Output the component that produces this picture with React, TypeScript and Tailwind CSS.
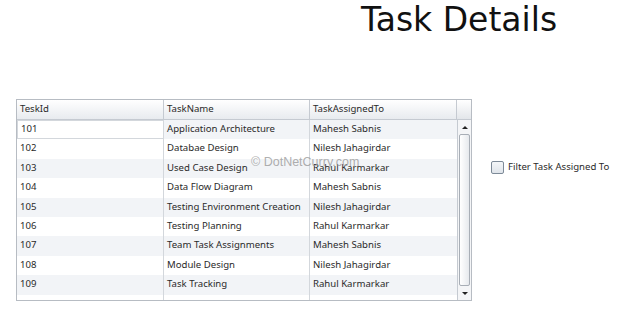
const rows = [
  ["101", "Application Architecture", "Mahesh Sabnis"],
  ["102", "Databae Design", "Nilesh Jahagirdar"],
  ["103", "Used Case Design", "Rahul Karmarkar"],
  ["104", "Data Flow Diagram", "Mahesh Sabnis"],
  ["105", "Testing Environment Creation", "Nilesh Jahagirdar"],
  ["106", "Testing Planning", "Rahul Karmarkar"],
  ["107", "Team Task Assignments", "Mahesh Sabnis"],
  ["108", "Module Design", "Nilesh Jahagirdar"],
  ["109", "Task Tracking", "Rahul Karmarkar"],
  ["110", "Deployment Planning", "Mahesh Sabnis"],
];

const uiFont = { fontFamily: '"Noto Sans", "Open Sans", sans-serif' };

export default function App() {
  return (
    <div className="relative w-[624px] h-[325px] bg-white overflow-hidden text-[#2a2a2a]" style={uiFont}>
      {/* Title */}
      <div className="pl-[361px] h-[99px]">
        <h1
          className="text-[33px] leading-[40px] text-[#111]"
          style={{ fontFamily: '"DejaVu Sans", Verdana, sans-serif' }}
        >
          Task Details
        </h1>
      </div>

      <div className="flex items-start pl-[16px]">
        {/* Data grid */}
        <div className="w-[456px] h-[202px] border border-[#b7bcc3] flex flex-col bg-white">
          {/* Header */}
          <div className="flex h-[20px] border-b border-[#c5cad1] bg-gradient-to-b from-white to-[#e8ebef] text-[9.6px] leading-[18px]">
            <div className="w-[147px] pl-[3px] border-r border-[#c5cad1]">TeskId</div>
            <div className="w-[146px] pl-[3px] border-r border-[#c5cad1]">TaskName</div>
            <div className="w-[147px] pl-[3px] border-r border-[#c5cad1]">TaskAssignedTo</div>
            <div className="flex-1 bg-gradient-to-b from-white to-[#e3e6ea]"></div>
          </div>

          {/* Body */}
          <div className="flex flex-1 overflow-hidden">
            <div className="w-[440px] overflow-hidden">
              {rows.map((r, i) => (
                <div
                  key={r[0]}
                  className={`flex h-[19.4px] text-[9.6px] leading-[18px] ${i % 2 === 0 ? "bg-[#f2f4f7]" : "bg-white"}`}
                >
                  <div
                    className={`w-[147px] pl-[3px] border-r border-[#d3d7dc] ${
                      i === 0 ? "bg-white border border-[#a9c0d6] leading-[16px]" : ""
                    }`}
                  >
                    {r[0]}
                  </div>
                  <div className="w-[146px] pl-[3px] border-r border-[#d3d7dc] whitespace-nowrap overflow-hidden">{r[1]}</div>
                  <div className="w-[147px] pl-[3px] whitespace-nowrap overflow-hidden">{r[2]}</div>
                </div>
              ))}
            </div>

            {/* Scrollbar */}
            <div className="flex-1 flex flex-col items-center border-l border-[#c5cad1] bg-[#f4f5f7]">
              <div className="h-[14px] flex items-center justify-center">
                <div className="w-0 h-0 border-l-[3px] border-r-[3px] border-b-[3px] border-l-transparent border-r-transparent border-b-[#222]"></div>
              </div>
              <div className="w-[11px] flex-1 rounded-[2px] border border-[#a8aeb6] bg-gradient-to-r from-white to-[#e6e9ed]"></div>
              <div className="h-[14px] flex items-center justify-center">
                <div className="w-0 h-0 border-l-[3px] border-r-[3px] border-t-[3px] border-l-transparent border-r-transparent border-t-[#222]"></div>
              </div>
            </div>
          </div>
        </div>

        {/* Filter checkbox */}
        <label className="flex items-center gap-[4px] ml-[19px] mt-[61px] text-[9.6px] text-[#2a2a2a] whitespace-nowrap">
          <span className="w-[13px] h-[13px] rounded-[2px] border border-[#7d8a98] bg-gradient-to-b from-[#f4f6f8] to-[#dfe4ea]"></span>
          Filter Task Assigned To
        </label>
      </div>

      {/* Watermark */}
      <div
        className="absolute left-[251px] top-[153px] text-[12.5px] text-[#9a9a9a]/80 pointer-events-none"
        style={{ fontFamily: '"Liberation Sans", Arial, sans-serif' }}
      >
        © DotNetCurry.com
      </div>
    </div>
  );
}
